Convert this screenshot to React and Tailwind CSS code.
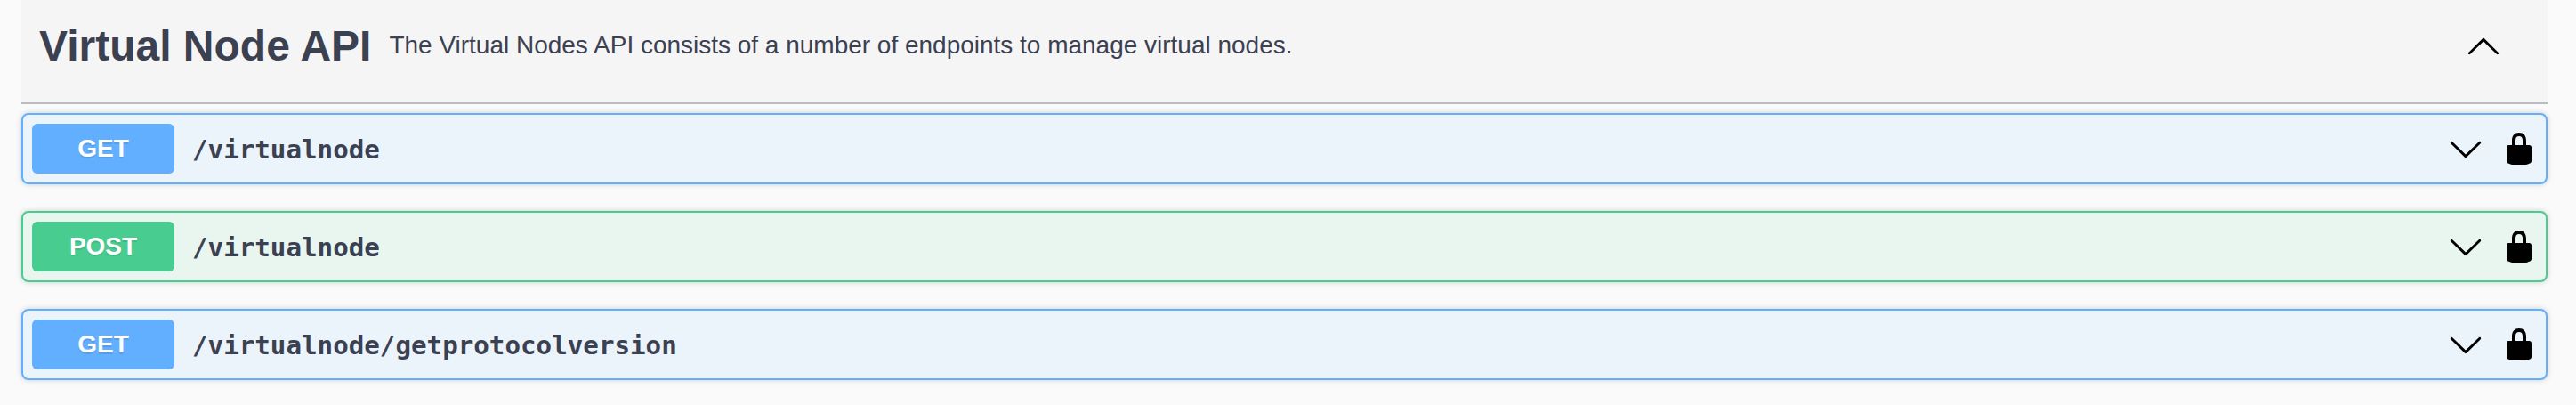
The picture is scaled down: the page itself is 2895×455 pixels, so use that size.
const CHEVRON_UP =
  "M 17.418 14.908 C 17.69 15.176 18.127 15.176 18.397 14.908 C 18.667 14.64 18.668 14.207 18.397 13.939 L 10.489 6.109 C 10.219 5.841 9.782 5.841 9.51 6.109 L 1.602 13.939 C 1.332 14.207 1.332 14.64 1.602 14.908 C 1.873 15.176 2.311 15.176 2.582 14.908 L 10 7.767 L 17.418 14.908 Z";
const CHEVRON_DOWN =
  "M 17.418 6.109 C 17.69 5.841 18.127 5.841 18.397 6.109 C 18.668 6.377 18.668 6.81 18.397 7.078 L 10.489 14.908 C 10.219 15.176 9.782 15.176 9.51 14.908 L 1.602 7.078 C 1.332 6.81 1.332 6.377 1.602 6.109 C 1.873 5.841 2.311 5.841 2.582 6.109 L 10 13.25 L 17.418 6.109 Z";
const LOCK =
  "M15.8 8H14V5.6C14 2.703 12.665 1 10 1 7.334 1 6 2.703 6 5.6V8H4c-.553 0-1 .646-1 1.199V17c0 .549.428 1.139.951 1.307l1.197.387C5.672 18.861 6.55 19 7.1 19h5.8c.549 0 1.428-.139 1.951-.307l1.196-.387c.524-.167.953-.757.953-1.306V9.199C17 8.646 16.352 8 15.8 8zM12 8H8V5.199C8 3.754 8.797 3 10 3c1.203 0 2 .754 2 2.199V8z";

function Icon({ path }) {
  return (
    <svg viewBox="0 0 20 20" className="size-10 shrink-0 fill-black">
      <path d={path} />
    </svg>
  );
}

const METHODS = {
  GET: { row: "border-[#61affe] bg-[#ebf3fb]", badge: "bg-[#61affe]" },
  POST: { row: "border-[#49cc90] bg-[#e9f6ef]", badge: "bg-[#49cc90]" },
};

const OPERATIONS = [
  { method: "GET", path: "/virtualnode" },
  { method: "POST", path: "/virtualnode" },
  { method: "GET", path: "/virtualnode/getprotocolversion" },
];

function Operation({ method, path }) {
  const style = METHODS[method];
  return (
    <div
      className={`flex h-20 items-center rounded-lg border-2 px-2.5 shadow-[0_0_6px_rgba(0,0,0,0.19)] ${style.row}`}
    >
      <span
        className={`flex h-14 w-40 shrink-0 items-center justify-center rounded-md text-[28px] leading-8 font-bold text-white [text-shadow:0_2px_0_rgba(0,0,0,0.1)] ${style.badge}`}
      >
        {method}
      </span>
      <span className="ml-5 flex-1 pt-0.5 font-['DejaVu_Sans_Mono',monospace] text-[29.2px] leading-9 font-bold">
        {path}
      </span>
      <button className="mr-5">
        <Icon path={CHEVRON_DOWN} />
      </button>
      <button>
        <Icon path={LOCK} />
      </button>
    </div>
  );
}

export default function App() {
  return (
    <main className="h-[455px] overflow-hidden bg-[#fafafa] pr-8 pl-6 font-['Liberation_Sans',Arial,sans-serif] text-[#3b4151]">
      <header className="flex h-[117px] items-start border-b-2 border-[#b9bdc2] bg-[#f5f5f5] pr-[52px] pl-5">
        <h3 className="mt-[25px] text-[48px] leading-[54px] font-bold whitespace-nowrap">Virtual Node API</h3>
        <p className="mt-[35px] ml-5 flex-1 text-[28px] leading-8 tracking-[-0.01px]">
          The Virtual Nodes API consists of a number of endpoints to manage virtual nodes.
        </p>
        <button className="mt-[31px]">
          <Icon path={CHEVRON_UP} />
        </button>
      </header>
      <div className="flex flex-col gap-[30px] pt-2.5">
        {OPERATIONS.map((op) => (
          <Operation key={op.method + op.path} {...op} />
        ))}
      </div>
    </main>
  );
}
